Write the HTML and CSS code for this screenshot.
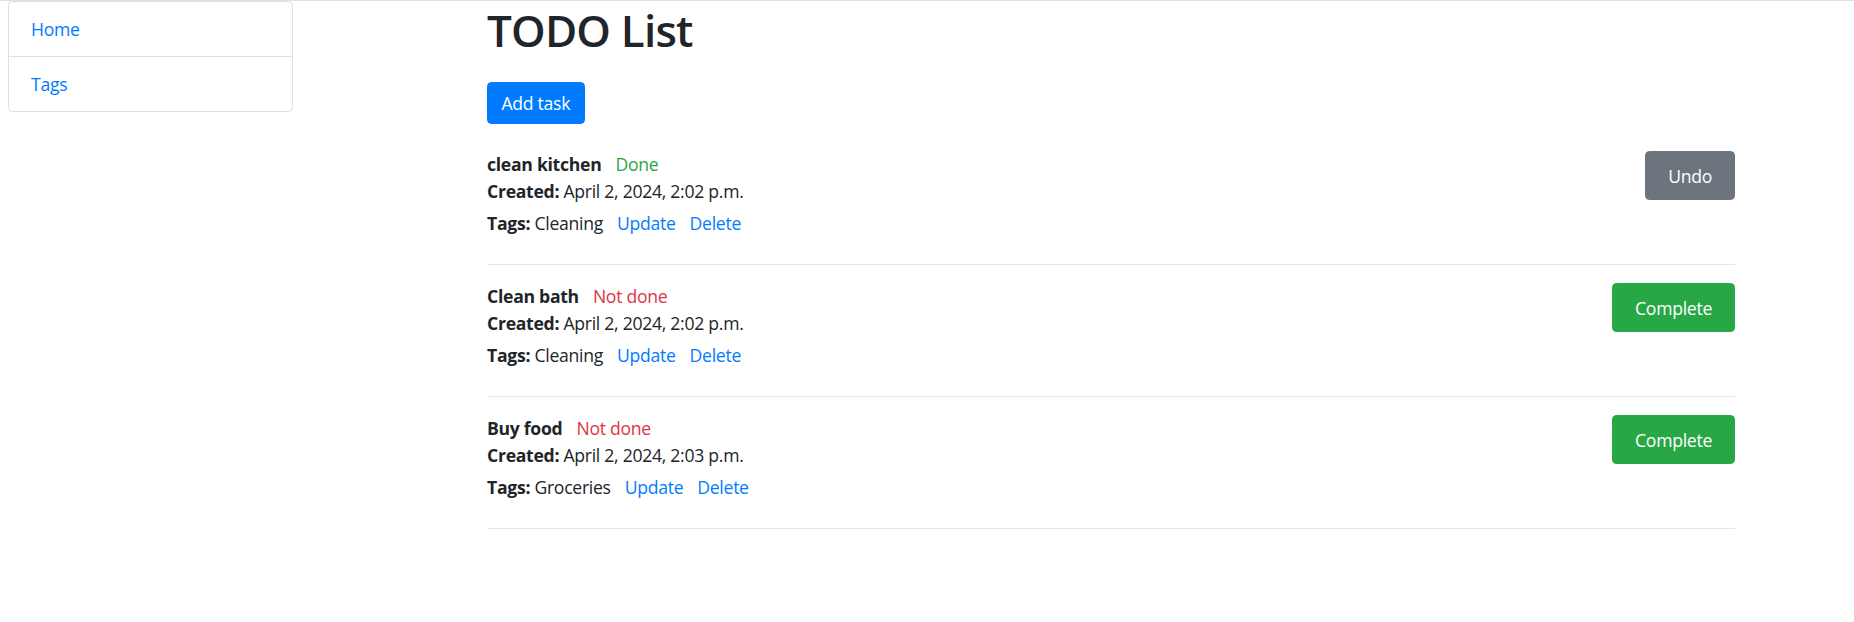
FILE: index.html
```html
<!DOCTYPE html>
<html lang="en">
<head>
<meta charset="utf-8">
<title>TODO List</title>
<link rel="stylesheet" href="styles.css">
</head>
<body>
<div class="topline"></div>
<div class="layout">
  <aside class="sidebar">
    <ul class="list-group">
      <li class="list-group-item"><a href="#">Home</a></li>
      <li class="list-group-item"><a href="#">Tags</a></li>
    </ul>
  </aside>
  <main class="main">
    <h1 class="page-title">TODO List</h1>
    <a href="#" class="btn btn-primary btn-add">Add task</a>
    <div class="tasks">
      <div class="task">
        <div class="task-info">
          <div class="task-line task-title"><strong>clean kitchen</strong><span class="status status-done">Done</span></div>
          <div class="task-line"><strong>Created:</strong> April 2, 2024, 2:02 p.m.</div>
          <div class="task-line task-tags"><span><strong>Tags:</strong> Cleaning</span><a href="#">Update</a><a href="#">Delete</a></div>
        </div>
        <a href="#" class="btn btn-secondary btn-action">Undo</a>
      </div>
      <div class="task">
        <div class="task-info">
          <div class="task-line task-title"><strong>Clean bath</strong><span class="status status-not">Not done</span></div>
          <div class="task-line"><strong>Created:</strong> April 2, 2024, 2:02 p.m.</div>
          <div class="task-line task-tags"><span><strong>Tags:</strong> Cleaning</span><a href="#">Update</a><a href="#">Delete</a></div>
        </div>
        <a href="#" class="btn btn-success btn-action">Complete</a>
      </div>
      <div class="task">
        <div class="task-info">
          <div class="task-line task-title"><strong>Buy food</strong><span class="status status-not">Not done</span></div>
          <div class="task-line"><strong>Created:</strong> April 2, 2024, 2:03 p.m.</div>
          <div class="task-line task-tags"><span><strong>Tags:</strong> Groceries</span><a href="#">Update</a><a href="#">Delete</a></div>
        </div>
        <a href="#" class="btn btn-success btn-action">Complete</a>
      </div>
    </div>
  </main>
</div>
</body>
</html>
```
FILE: styles.css
```css
* { box-sizing: border-box; }
html, body { margin: 0; padding: 0; background: #fff; }
body {
  font-family: "Open Sans", "Noto Sans", "Liberation Sans", sans-serif;
  font-size: 17.6px;
  line-height: 1.5;
  color: #212529;
  letter-spacing: -0.28px;
}
a { color: #007bff; text-decoration: none; }
strong { font-weight: 700; }

.topline { height: 1px; background: #dfe2db; }

.layout { display: flex; align-items: flex-start; }

.sidebar { width: 285px; margin-left: 8px; flex: none; }
.list-group {
  list-style: none; margin: 0; padding: 0;
  border: 1px solid #dfdfdf; border-radius: 4.4px;
}
.list-group-item { padding: 14.4px 22px 12.8px; line-height: 26.6px; }
.list-group-item + .list-group-item { border-top: 1px solid #dfdfdf; }

.main { width: 1248px; margin-left: 194px; flex: none; }
.page-title {
  margin: 3px 0 0; font-size: 44px; font-weight: 600; line-height: 52.8px;
  letter-spacing: -0.8px;
}

.btn {
  display: inline-block; border: 1px solid transparent; border-radius: 4.4px;
  color: #fff; font-weight: 400; text-align: center; white-space: nowrap;
}
.btn-primary { background: #007bff; border-color: #007bff; }
.btn-secondary { background: #6c757d; border-color: #6c757d; }
.btn-success { background: #28a745; border-color: #28a745; }
.btn-add { margin-top: 25px; padding: 7.5px 13.5px 6.5px; line-height: 26.4px; }

.tasks { margin-top: 8.5px; }
.task {
  display: flex; justify-content: space-between; align-items: flex-start;
  padding: 18px 0 26.5px; border-bottom: 1px solid #e5e5e5;
}
.task-line { line-height: 27.5px; white-space: nowrap; }
.task-title, .task-tags { display: flex; gap: 14px; }
.task-tags { margin-top: 4px; }
.status-done { color: #28a745; }
.status-not { color: #dc3545; }
.btn-action { margin-top: 0; padding: 11px 22px 9px; line-height: 27px; }
```
